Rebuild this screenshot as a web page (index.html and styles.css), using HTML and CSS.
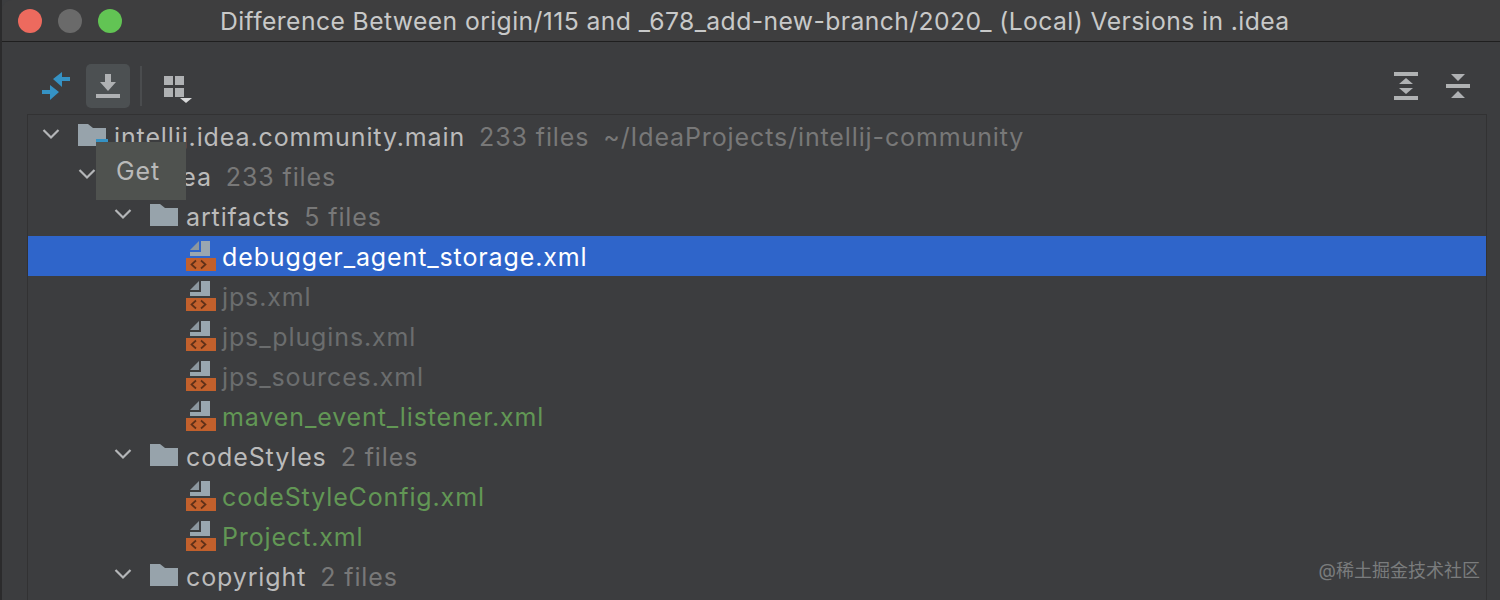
FILE: index.html
```html
<!DOCTYPE html>
<html lang="en">
<head>
    <meta charset="UTF-8">
    <title>Difference Between origin/115 and _678_add-new-branch/2020_ (Local) Versions in .idea</title>
    <link rel="stylesheet" href="styles.css">
</head>
<body>
    <svg class="defs" width="0" height="0">
        <symbol id="chevron" viewBox="0 0 18 12">
            <path d="M1.500 2 L9 9.500 L16.500 2" fill="none" stroke="#b4b6b8" stroke-width="2.200"/>
        </symbol>
        <symbol id="folder" viewBox="0 0 28 22">
            <path d="M0 0 H10 L15 4 H28 V22 H0 Z" fill="#97a3ab"/>
        </symbol>
        <symbol id="xml" viewBox="0 0 30 30">
            <path d="M13 0 V9 H4 Z" fill="#8c979f"/>
            <path d="M15 0 H24 V15 H4 V11 H15 Z" fill="#9aa7b0"/>
            <rect x="0" y="17" width="30" height="13" fill="#c2602c"/>
            <path d="M10 19.500 L5.500 23.500 L10 27.500 M15 19.500 L19.500 23.500 L15 27.500" fill="none" stroke="#5e3018" stroke-width="1.700"/>
        </symbol>
    </svg>

    <div class="window">
        <!-- Title bar -->
        <header class="titlebar">
            <div class="lights">
                <span class="light red"></span>
                <span class="light grey"></span>
                <span class="light green"></span>
            </div>
            <h1>Difference Between origin/115 and _678_add-new-branch/2020_ (Local) Versions in .idea</h1>
        </header>

        <!-- Toolbar -->
        <div class="toolbar">
            <div class="tool sync-tool">
                <svg width="28" height="28" viewBox="0 0 28 28">
                    <path d="M11 7 L20 0 V5 H28 V9 H20 V15 Z" fill="#3592c4"/>
                    <path d="M17 20 L8 13 V18 H0 V22 H8 V28 Z" fill="#3592c4"/>
                </svg>
            </div>
            <div class="tool active">
                <svg width="24" height="24" viewBox="0 0 24 24">
                    <path d="M9 0 H15 V8 H20 L12 17 L4 8 H9 Z" fill="#afb1b3"/>
                    <rect x="0" y="20" width="24" height="4" fill="#afb1b3"/>
                </svg>
            </div>
            <span class="sep"></span>
            <div class="tool group-tool">
                <svg width="28" height="27" viewBox="0 0 28 27">
                    <path d="M0 0 H9 V9 H0 Z M11 0 H20 V9 H11 Z M0 12 H9 V21 H0 Z M11 12 H20 V21 H11 Z" fill="#afb1b3"/>
                    <path d="M16 22 H28 L22 27 Z" fill="#d8d9da"/>
                </svg>
            </div>
            <div class="tool-right">
                <svg width="24" height="28" viewBox="0 0 24 28">
                    <path d="M0 0 H24 V4 H0 Z M0 24 H24 V28 H0 Z" fill="#b0b2b3"/>
                    <path d="M12 6 L19 12 H5 Z M5 16 H19 L12 22 Z" fill="#afb1b3"/>
                </svg>
                <svg width="24" height="28" viewBox="0 0 24 28">
                    <path d="M0 12 H24 V16 H0 Z" fill="#b0b2b3"/>
                    <path d="M5 2 H19 L12 9 Z M12 19 L19 26 H5 Z" fill="#afb1b3"/>
                </svg>
            </div>
        </div>

        <!-- Tree -->
        <div class="tree">
            <div class="row lvl0">
                <svg class="chev"><use href="#chevron"/></svg>
                <svg class="folder"><use href="#folder"/></svg>
                <span class="name">intellij.idea.community.main</span>
                <span class="info">233 files</span>
                <span class="info">~/IdeaProjects/intellij-community</span>
            </div>
            <div class="row lvl1">
                <svg class="chev"><use href="#chevron"/></svg>
                <svg class="folder"><use href="#folder"/></svg>
                <span class="name">.idea</span>
                <span class="info">233 files</span>
            </div>
            <div class="row lvl2">
                <svg class="chev"><use href="#chevron"/></svg>
                <svg class="folder"><use href="#folder"/></svg>
                <span class="name">artifacts</span>
                <span class="info">5 files</span>
            </div>
            <div class="row file selected">
                <svg class="xml"><use href="#xml"/></svg>
                <span class="name">debugger_agent_storage.xml</span>
            </div>
            <div class="row file">
                <svg class="xml"><use href="#xml"/></svg>
                <span class="name muted">jps.xml</span>
            </div>
            <div class="row file">
                <svg class="xml"><use href="#xml"/></svg>
                <span class="name muted">jps_plugins.xml</span>
            </div>
            <div class="row file">
                <svg class="xml"><use href="#xml"/></svg>
                <span class="name muted">jps_sources.xml</span>
            </div>
            <div class="row file">
                <svg class="xml"><use href="#xml"/></svg>
                <span class="name added">maven_event_listener.xml</span>
            </div>
            <div class="row lvl2">
                <svg class="chev"><use href="#chevron"/></svg>
                <svg class="folder"><use href="#folder"/></svg>
                <span class="name">codeStyles</span>
                <span class="info">2 files</span>
            </div>
            <div class="row file">
                <svg class="xml"><use href="#xml"/></svg>
                <span class="name added">codeStyleConfig.xml</span>
            </div>
            <div class="row file">
                <svg class="xml"><use href="#xml"/></svg>
                <span class="name added">Project.xml</span>
            </div>
            <div class="row lvl2">
                <svg class="chev"><use href="#chevron"/></svg>
                <svg class="folder"><use href="#folder"/></svg>
                <span class="name">copyright</span>
                <span class="info">2 files</span>
            </div>
        </div>

        <!-- Tooltip over the tree -->
        <span class="folder-mark"></span>
        <div class="tooltip">Get</div>
        <div class="watermark">@稀土掘金技术社区</div>
    </div>
</body>
</html>
```

FILE: styles.css
```css
* {
    margin: 0;
    padding: 0;
    box-sizing: border-box;
    font-family: Inter, "Noto Sans CJK SC", sans-serif;
}

body {
    background-color: #2b2b2c;
    width: 1500px;
    height: 600px;
    overflow: hidden;
}

.defs {
    position: absolute;
}

.window {
    position: relative;
    height: 600px;
    margin-left: 2px;
    background-color: #3c3d3f;
    overflow: hidden;
}

.titlebar {
    display: flex;
    align-items: center;
    height: 42px;
    background-color: #3e3e3f;
    border-bottom: 1px solid #1f1f1f;
    border-top-left-radius: 10px;
}

.lights {
    display: flex;
    gap: 16px;
    padding-left: 16px;
}

.light {
    width: 24px;
    height: 24px;
    border-radius: 50%;
}

.red { background-color: #ed6a5e; }
.grey { background-color: #6a6a6a; }
.green { background-color: #62c454; }

.titlebar h1 {
    margin-left: 98px;
    font-size: 24.700px;
    font-weight: 400;
    letter-spacing: 0.410px;
    color: #c8c9c9;
    white-space: nowrap;
}

.toolbar {
    display: flex;
    align-items: center;
    height: 72px;
    padding: 15px 30px 0 34px;
}

.tool {
    display: flex;
    align-items: center;
    justify-content: center;
    width: 44px;
    height: 44px;
    border-radius: 5px;
}

.sync-tool svg {
    margin-right: 4px;
}

.tool.active {
    background-color: #4c5052;
    margin-left: 6px;
}

.sep {
    width: 2px;
    height: 40px;
    margin: 0 10px;
    background-color: #4a4c4e;
}

.group-tool svg {
    margin-left: 8px;
    margin-top: 7px;
}

.tool-right {
    display: flex;
    gap: 28px;
    margin-left: auto;
}

.tree {
    height: 486px;
    margin-left: 25px;
    margin-right: 13px;
    border: 1px solid #323233;
    border-bottom: 0;
    padding-top: 1px;
}

.row {
    display: flex;
    align-items: center;
    height: 40px;
    font-size: 25px;
    letter-spacing: 0.880px;
    white-space: nowrap;
}

.chev {
    width: 18px;
    height: 12px;
    margin-right: 18px;
    margin-bottom: 4px;
    flex-shrink: 0;
}

.folder {
    width: 28px;
    height: 22px;
    margin-right: 8px;
    margin-bottom: 2px;
    flex-shrink: 0;
}

.xml {
    width: 30px;
    height: 30px;
    margin-right: 6px;
    flex-shrink: 0;
}

.lvl0 { padding-left: 14px; }
.lvl1 { padding-left: 50px; }
.lvl2 { padding-left: 86px; }
.file { padding-left: 158px; }

.name {
    padding-top: 2px;
    color: #bbbbbb;
}

.info {
    padding-top: 2px;
    margin-left: 14px;
    color: #787878;
}

.muted { color: #6b6d6e; }
.added { color: #629755; }

.selected {
    background-color: #2f65ca;
}

.selected .name {
    color: #ffffff;
}

.folder-mark {
    position: absolute;
    left: 94px;
    top: 139px;
    width: 12px;
    height: 3px;
    background-color: #3592c4;
}

.tooltip {
    position: absolute;
    left: 94px;
    top: 142px;
    width: 90px;
    height: 58px;
    padding: 14px 0 0 20px;
    background-color: #4f524f;
    font-size: 25px;
    letter-spacing: 0.880px;
    color: #b9b9b9;
}

.watermark {
    position: absolute;
    right: 20px;
    bottom: 18px;
    font-size: 18px;
    color: #7a7c7d;
}
```
